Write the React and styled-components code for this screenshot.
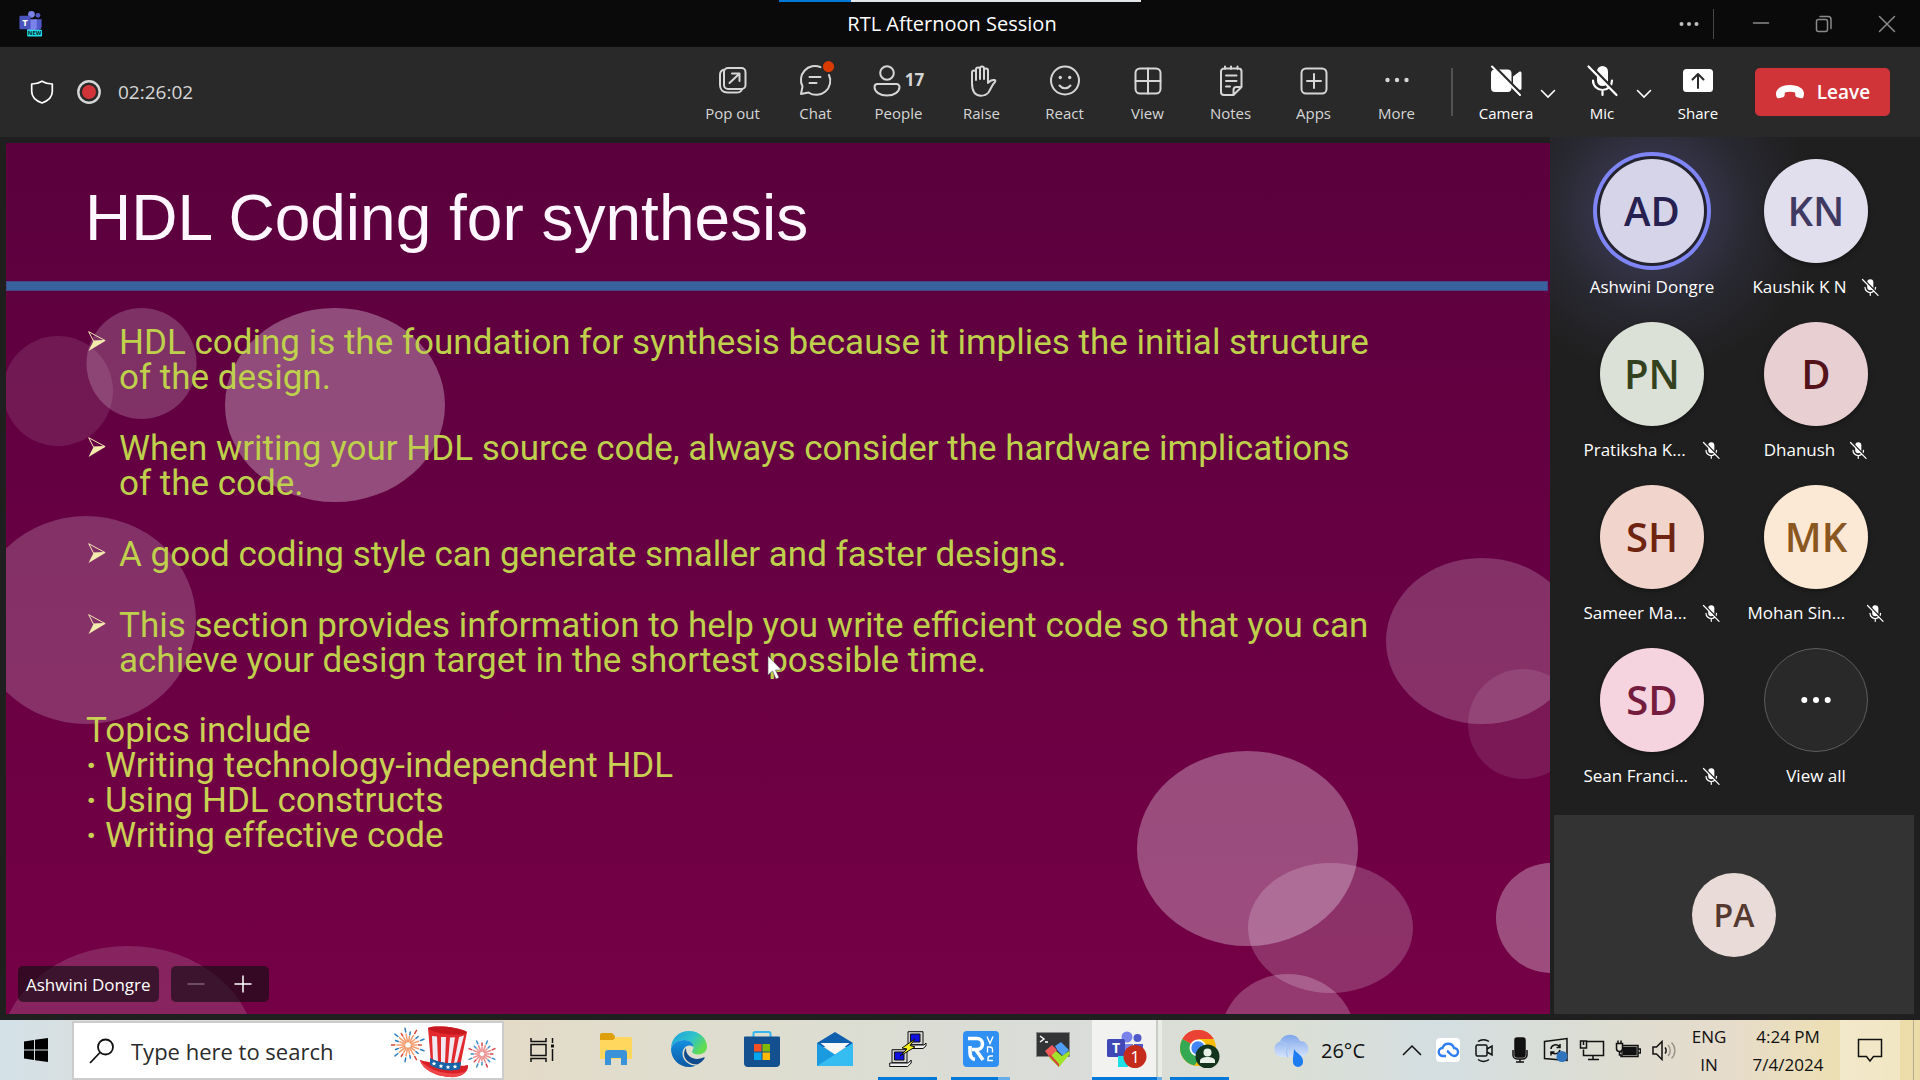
import React from "react";
import styled, { createGlobalStyle, css } from "styled-components";

const ui = `"Open Sans", "Noto Sans", sans-serif`;

const GlobalStyle = createGlobalStyle`
  *, *::before, *::after { box-sizing: border-box; }
  body { margin: 0; background: #1f1f1f; font-family: ${ui}; color: #fff; }
  button, input { font: inherit; color: inherit; }
  button { border: 0; padding: 0; background: none; cursor: pointer; }
  h1, h2, p, ul { margin: 0; padding: 0; font-weight: 400; }
  ul { list-style: none; }
  svg { display: block; flex: none; }
`;

const Screen = styled.div`
  min-height: 100vh;
  display: flex;
  flex-direction: column;
  background: #1f1f1f;
`;

/* ---------- window title bar ---------- */

const TitleBar = styled.header`
  position: relative;
  height: 47px;
  display: grid;
  grid-template-columns: 1fr auto 1fr;
  align-items: center;
  background: #0a0a0a;
`;
const TitleSide = styled.div`
  display: flex;
  align-items: center;
  justify-content: ${(p) => (p.$end ? "flex-end" : "flex-start")};
  padding: ${(p) => (p.$end ? "0 2px 0 0" : "0 0 0 18px")};
`;
const WindowTitle = styled.h1`
  padding-right: 16px;
  font-size: 20px;
  line-height: 28px;
  white-space: nowrap;
`;
const LoadBar = styled.div`
  position: absolute;
  top: 0;
  left: calc(50% - 181px);
  width: 362px;
  height: 2px;
  background: linear-gradient(90deg, #0078d7 72px, #e3e6e8 72px);
`;
const WindowButton = styled.button`
  width: 63px;
  height: 47px;
  display: grid;
  place-items: center;
  color: #8a8a8a;
`;
const MoreButton = styled(WindowButton)`
  width: 48px;
  color: #c0c0c0;
`;
const TitleDivider = styled.span`
  width: 1px;
  height: 30px;
  margin-right: 15px;
  background: #484848;
`;

/* ---------- meeting toolbar ---------- */

const Toolbar = styled.div`
  height: 90px;
  display: flex;
  align-items: center;
  padding: 0 30px;
  background: #292929;
`;
const Status = styled.div`
  flex: 1;
  display: flex;
  align-items: center;
  font-size: 19px;
  line-height: 28px;
  color: #d6d6d6;
`;
const StatusIcon = styled.span`
  margin-right: ${(p) => p.$gap}px;
`;
const ToolButton = styled.button`
  width: ${(p) => p.$w || 83}px;
  margin-right: ${(p) => p.$after || 0}px;
  display: flex;
  flex-direction: column;
  align-items: center;
  gap: 4px;
  padding-top: 2px;
  font-size: 15px;
  line-height: 22px;
  white-space: nowrap;
  color: ${(p) => (p.$bright ? "#fff" : "#d6d6d6")};
`;
const ToolIcon = styled.span`
  height: 36px;
  display: flex;
  align-items: center;
  gap: 2px;
  font-size: 17px;
  font-weight: 700;
  svg { overflow: visible; }
`;
const ToolDivider = styled.span`
  width: 2px;
  height: 48px;
  margin: 0 21px 0 13px;
  background: #525252;
`;
const ChevronButton = styled.button`
  width: 20px;
  height: 36px;
  margin-right: ${(p) => p.$gap}px;
  display: grid;
  place-items: center;
  padding-top: 4px;
`;
const LeaveButton = styled.button`
  width: 135px;
  height: 48px;
  display: flex;
  align-items: center;
  justify-content: center;
  gap: 12px;
  border-radius: 5px;
  background: #d13438;
  font-size: 19px;
  font-weight: 600;
`;

/* ---------- shared slide ---------- */

const Main = styled.main`
  flex: 1;
  display: flex;
`;
const Stage = styled.section`
  flex: 1;
  min-width: 0;
  padding: 6px 0 6px 6px;
  display: flex;
`;
const Slide = styled.article`
  position: relative;
  flex: 1;
  display: flex;
  flex-direction: column;
  overflow: hidden;
  background: linear-gradient(#5b003d, #660042 45%, #750045);
`;
const Bubbles = styled.svg`
  position: absolute;
  inset: 0;
  width: 100%;
  height: 100%;
`;
const SlideHeader = styled.div`
  position: relative;
  height: 138px;
  padding: 12px 0 0 79px;
  display: flex;
  align-items: center;
`;
const SlideTitle = styled.h2`
  font-family: "Liberation Sans", Arial, sans-serif;
  font-size: 64px;
  line-height: 72px;
  color: #fff6ff;
  white-space: nowrap;
`;
const SlideRule = styled.div`
  height: 10px;
  margin-right: 2px;
  background: #38639c;
  border: 1px solid #48468a;
`;
const SlideBody = styled.div`
  position: relative;
  padding: 34px 0 0 80px;
  font-family: Roboto, "Liberation Sans", sans-serif;
  font-size: 35px;
  font-weight: 300;
  line-height: 35px;
  color: #bfd04c;
  white-space: nowrap;
`;
const Points = styled.ul`
  display: flex;
  flex-direction: column;
  gap: 36px;
  margin-bottom: 35px;
`;
const Point = styled.li`
  display: flex;
  gap: 13px;
  svg { margin: 6px 0 0 2px; }
`;
const Topics = styled.div`
  color: #c9d053;
`;
const Topic = styled.li`
  display: flex;
  &::before { content: "·"; width: 19px; font-weight: 700; }
`;
const StageControls = styled.div`
  position: absolute;
  left: 12px;
  bottom: 12px;
  display: flex;
  gap: 12px;
`;
const Pill = styled.div`
  height: 36px;
  display: flex;
  align-items: center;
  padding: 0 ${(p) => p.$pad}px;
  border-radius: 5px;
  background: rgba(20, 12, 18, 0.65);
  font-size: 17px;
  white-space: nowrap;
`;
const ZoomButton = styled.button`
  width: 47px;
  height: 36px;
  display: grid;
  place-items: center;
  color: ${(p) => (p.disabled ? "#80607a" : "#fff")};
`;
const Pointer = styled.svg`
  position: absolute;
  left: 761px;
  top: 512px;
`;

/* ---------- participants ---------- */

const Sidebar = styled.aside`
  width: 370px;
  display: flex;
  flex-direction: column;
  padding: 22px 6px 6px 4px;
  background: radial-gradient(circle at 102px 74px, rgba(112, 112, 190, 0.42), rgba(112, 112, 190, 0.1) 105px, transparent 165px);
`;
const People = styled.ul`
  display: grid;
  grid-template-columns: repeat(2, 164px);
  grid-auto-rows: 163px;
  padding-left: 16px;
`;
const Person = styled.li`
  display: flex;
  flex-direction: column;
  align-items: center;
  gap: 12px;
`;
const avatarShape = css`
  width: 104px;
  height: 104px;
  display: grid;
  place-items: center;
  border-radius: 50%;
`;
const Avatar = styled.div`
  ${avatarShape}
  background: ${(p) => p.$bg};
  color: ${(p) => p.$fg};
  font-size: 40px;
  font-weight: 600;
  line-height: 52px;
  box-shadow: ${(p) =>
    p.$speaking ? "0 0 0 3px #23232f, 0 0 0 7px #7f85f5" : "0 2px 5px rgba(0,0,0,.35)"};
`;
const ViewAll = styled.button`
  ${avatarShape}
  border: 1px solid #5c5c5c;
  background: #292929;
`;
const NameRow = styled.div`
  display: flex;
  align-items: center;
  gap: 13px;
  height: 24px;
  font-size: 17px;
  line-height: 24px;
  white-space: nowrap;
`;
const Name = styled.span`
  ${(p) => p.$cut && "width: 104px;"}
`;
const SelfTile = styled.div`
  flex: 1;
  margin-top: 4px;
  display: grid;
  place-items: center;
  background: #333;
`;
const SelfAvatar = styled(Avatar)`
  width: 84px;
  height: 84px;
  font-size: 32px;
  line-height: 40px;
  box-shadow: none;
`;

/* ---------- task bar ---------- */

const TaskBar = styled.footer`
  height: 60px;
  display: flex;
  color: #111;
  background: linear-gradient(
    90deg, #d3e1e8 0, #d8dfe0 4%, #e4dac6 26%, #e0ddcd 33%, #dcddd2 45%, #d9dcd9 56%,
    #dcdfd3 66%, #d4dee1 75%, #dcddd3 83%, #e6dccb 90%, #ecdfb6 95%, #ecdca8 100%
  );
`;
const StartButton = styled.button`
  width: 72px;
  display: grid;
  place-items: center;
`;
const SearchBox = styled.label`
  width: 432px;
  margin-top: 1px;
  display: flex;
  align-items: center;
  padding: 0 5px 0 15px;
  background: #fff;
  border: 2px solid #ccc;
`;
const SearchInput = styled.input`
  flex: 1;
  min-width: 0;
  margin-left: 16px;
  padding: 0;
  border: 0;
  outline: 0;
  background: none;
  font-size: 22px;
  &::placeholder { color: #2b2b2b; opacity: 1; }
`;
const TaskViewButton = styled(StartButton)`
  width: 75px;
`;
const AppButton = styled.button`
  width: 73px;
  display: flex;
  flex-direction: column;
  align-items: center;
`;
const AppFace = styled.span`
  flex: 1;
  width: ${(p) => (p.$active ? 70 : 59)}px;
  display: grid;
  place-items: center;
  background: ${(p) =>
    p.$active
      ? "linear-gradient(90deg, #f2f3f1 64px, #c9cbc5 64px, #c9cbc5 66px, #eaece6 66px)"
      : "none"};
`;
const Underline = styled.span`
  width: ${(p) => (p.$active ? 70 : 59)}px;
  height: 3px;
  background: ${(p) =>
    !p.$open
      ? "transparent"
      : p.$stacked
      ? `linear-gradient(90deg, #0078d7 ${p.$stacked}px, #66aee8 ${p.$stacked}px)`
      : "#0078d7"};
`;
const Spacer = styled.span`
  flex: 1;
`;
const Weather = styled.button`
  width: 132px;
  display: flex;
  align-items: center;
  gap: 12px;
  padding-left: 11px;
  font-size: 20px;
`;
const TrayButton = styled.button`
  width: 36px;
  display: grid;
  place-items: center;
`;
const TrayText = styled.button`
  width: ${(p) => p.$w}px;
  padding-top: 2px;
  font-size: 17px;
  line-height: 28px;
  text-align: center;
  white-space: nowrap;
`;
const ActionCenter = styled.button`
  width: 60px;
  display: grid;
  place-items: center;
  background: rgba(255, 255, 255, 0.3);
`;
const ShowDesktop = styled.button`
  width: 7px;
  margin-left: 13px;
  border-left: 1px solid #b4ab90;
`;

/* ---------- icons ---------- */

const Line = ({ size = 36, children, w = 2, vb = 36, width }) => (
  <svg width={width || size} height={size} viewBox={`0 0 ${width || vb} ${vb}`} fill="none" stroke="currentColor"
    strokeWidth={w} strokeLinecap="round" strokeLinejoin="round" aria-hidden="true">{children}</svg>
);

const Dots = ({ r = 2.2, gap = 9.5, size = 36 }) => (
  <svg width={size} height={size} viewBox="-18 -18 36 36" fill="currentColor" aria-hidden="true">
    {[-gap, 0, gap].map((x) => <circle key={x} cx={x} cy="0" r={r} />)}
  </svg>
);

const icons = {
  popout: (
    <Line>
      <rect x="9" y="6" width="21.500" height="21" rx="4" />
      <path d="M8.500 7.700C6 8.500 5 10.500 5 13v10c0 4.500 3 7.500 7.500 7.500h9c2.500 0 4.700-.8 5.500-3.300M14.500 21l9.800-9.300M17 11.500h7.500v7.500" />
    </Line>
  ),
  chat: (
    <Line>
      <path d="M22.500 5.200A14 14 0 0 0 4.500 24.500L3 32l7.500-1.500A14 14 0 0 0 31 13M11.500 15h11M11.500 21h7" />
      <circle cx="30.500" cy="4.600" r="5.600" fill="#da3b01" stroke="none" />
    </Line>
  ),
  people: (
    <Line width={30}>
      <circle cx="14" cy="11" r="6.800" />
      <path d="M4.500 22h19a3 3 0 0 1 3 3c0 5-5.500 8.500-12.500 8.500S1.500 30 1.500 25a3 3 0 0 1 3-3z" />
    </Line>
  ),
  raise: (
    <Line>
      <path d="M8 21V10.500a2 2 0 0 1 4 0V18M12 17V7.500a2 2 0 0 1 4 0V17M16 16V6.500a2 2 0 0 1 4 0V17M20 17V8.500a2 2 0 0 1 4 0V21c2-2.500 4-3.500 6.500-3 1 .3 1 1.300.4 2-3 3-4 7-6.500 10.500-1.800 2.300-4 3.200-7.400 3.200C10.500 33.700 8 29 8 21" />
    </Line>
  ),
  react: (
    <Line>
      <circle cx="18" cy="18.500" r="14" />
      <path d="M12.500 23.500c3 3.600 8 3.600 11 0" />
      <circle cx="13.300" cy="15.500" r="1.700" fill="currentColor" stroke="none" />
      <circle cx="22.700" cy="15.500" r="1.700" fill="currentColor" stroke="none" />
    </Line>
  ),
  view: (
    <Line>
      <rect x="5.500" y="6.500" width="25" height="25" rx="4.500" />
      <path d="M18 6.500v25M5.500 19h25" />
    </Line>
  ),
  notes: (
    <Line>
      <path d="M20.500 33H11a3 3 0 0 1-3-3V9.500a3 3 0 0 1 3-3h14.500a3 3 0 0 1 3 3V25zM20.500 33v-5a3 3 0 0 1 3-3h5M12 4.500v2.500M18 4.500v2.500M24.500 4.500v2.500M13 13.500h10.500M13 19h10.500M13 24.500h4" />
    </Line>
  ),
  apps: (
    <Line>
      <rect x="5.500" y="6.500" width="25" height="25" rx="4.500" />
      <path d="M18 12v14M11 19h14" />
    </Line>
  ),
  more: <Dots />,
  camera: (
    <svg width="36" height="36" viewBox="0 0 36 36" aria-hidden="true">
      <path fill="#fff" d="M7 7.500h12.500a4 4 0 0 1 4 4v14.500a4 4 0 0 1-4 4H7a4 4 0 0 1-4-4V11.500a4 4 0 0 1 4-4zM25 14.500l6.300-4.700c1-.7 2.200 0 2.200 1.200v15.500c0 1.200-1.200 1.900-2.200 1.200L25 23z" />
      <path stroke="#292929" strokeWidth="2.500" d="M6.500 4.500L34 32.500" />
      <path stroke="#fff" strokeWidth="2" strokeLinecap="round" d="M4 4.500L32 33" />
    </svg>
  ),
  share: (
    <svg width="36" height="36" viewBox="0 0 36 36" fill="none" aria-hidden="true">
      <rect x="3" y="7" width="30" height="23" rx="3.500" fill="#fff" />
      <path d="M18 26V12.500M12.500 17.500L18 12l5.500 5.500" stroke="#292929" strokeWidth="2" strokeLinecap="round" strokeLinejoin="round" />
    </svg>
  ),
};

const MicOff = ({ size = 36, cut = "#292929" }) => (
  <svg width={size} height={size} viewBox="0 0 36 36" fill="none" aria-hidden="true">
    <rect x="13" y="4" width="11" height="20" rx="5.500" fill="#fff" />
    <path d="M9 18.500a9.500 9.500 0 0 0 19 0M18.500 28.500V33" stroke="#fff" strokeWidth="2.200" strokeLinecap="round" />
    <path d="M7 4.500L34 32" stroke={cut} strokeWidth="3" />
    <path d="M4.500 4.500L32.500 33" stroke="#fff" strokeWidth="2.200" strokeLinecap="round" />
  </svg>
);

const ChevronDown = () => (
  <svg width="16" height="10" viewBox="0 0 16 10" fill="none" stroke="#fff" strokeWidth="1.600" strokeLinecap="round" aria-hidden="true">
    <path d="M1.500 1.500L8 8l6.500-6.500" />
  </svg>
);

const TeamsLogo = ({ size }) => (
  <svg width={size} height={size} viewBox="0 0 24 27" aria-hidden="true">
    <circle cx="12.500" cy="3.500" r="3.500" fill="#7b83eb" />
    <circle cx="19.200" cy="4.500" r="2.500" fill="#5059c9" />
    <path d="M16 8.500h7v8a4 4 0 0 1-7 2z" fill="#5059c9" />
    <path d="M8 8.500h10v9a6 6 0 0 1-10 3z" fill="#7b83eb" />
    <rect x="0" y="5" width="11.500" height="14" rx="1" fill="#4b53bc" />
    <text x="5.700" y="15.700" fill="#fff" fontFamily="Open Sans" fontWeight="700" fontSize="10" textAnchor="middle">T</text>
    <rect x="8" y="19.500" width="15.500" height="7" rx="1" fill="#1fe0e6" />
    <text x="15.700" y="25.300" fill="#08222b" fontFamily="Open Sans" fontWeight="700" fontSize="6" textAnchor="middle">NEW</text>
  </svg>
);

const Burst = ({ cx, cy, r, n, tones }) =>
  Array.from({ length: n }, (_, i) => {
    const a = (i * 2 * Math.PI) / n;
    const R = i % 2 ? r : r * 0.78;
    const p = (k) => [cx + Math.cos(a) * k, cy + Math.sin(a) * k];
    const [x1, y1] = p(r * 0.2), [x2, y2] = p(R * 0.65), [x3, y3] = p(R * 0.78), [x4, y4] = p(R);
    return (
      <g key={i} strokeWidth="1.500" strokeLinecap="round">
        <path d={`M${x1} ${y1}L${x2} ${y2}`} stroke={tones[0]} />
        <path d={`M${x3} ${y3}L${x4} ${y4}`} stroke={i % 3 ? tones[1] : tones[2]} />
      </g>
    );
  });

const SearchArt = () => (
  <svg width="106" height="54" viewBox="0 0 106 54" aria-hidden="true">
    <Burst cx={17} cy={21} r={17} n={18} tones={["#f59a6b", "#2f7fc0", "#dc4637"]} />
    <Burst cx={91} cy={30} r={14} n={16} tones={["#ec8f8f", "#3f8fca", "#d8424a"]} />
    <path d="M29 36c7 2 36 8 48 5 1 8-8 13-19 12-14-1-27-8-29-17z" fill="#d91f26" />
    <path d="M37 4c6-3 32-1 39 4l-7 35c-8 3-22 1-29-4z" fill="#e02a2e" />
    <path d="M41 12l5 .5 1 25-5-2zM50 13h5l-1 26-4-1zM59 13.500l5-.2-4 26-3-.3zM68 13l5-1.500-7 27-3 .5z" fill="#f1e9f2" />
    <path d="M37 4c8-3 30-1 39 4-3 5-36 2-39-4z" fill="#c8181f" />
    <path d="M39 34c8 5 22 6 31 4l-1 7c-9 3-22 1-30-4z" fill="#1763a8" />
    {[[43, 39.500], [50, 42], [57, 43], [64, 42.500]].map(([x, y]) => (
      <path key={x} fill="#fff" d={`M${x} ${y - 2}l.7 1.300 1.500.2-1.100 1 .3 1.500-1.400-.7-1.400.7.3-1.500-1.100-1 1.500-.2z`} />
    ))}
    <path d="M29 36c2 9 15 16 29 17 8 .5 14-2 17-6-14 6-36 1-46-11z" fill="#f2474a" />
  </svg>
);

const appIcons = {
  explorer: (
    <svg width="34" height="34" viewBox="0 0 34 34" aria-hidden="true">
      <path d="M1 3a2 2 0 0 1 2-2h10l3 3v5H1z" fill="#dd9f0b" />
      <path d="M1 8h13l3-3h14a2 2 0 0 1 2 2v20H1z" fill="#ffd75e" />
      <path d="M6 33V21a3 3 0 0 1 3-3h16a3 3 0 0 1 3 3v12h-6v-7H12v7z" fill="#3a93d8" />
    </svg>
  ),
  edge: (
    <svg width="36" height="36" viewBox="0 0 36 36" aria-hidden="true">
      <defs>
        <linearGradient id="edgeTop" x1="0" y1="0" x2="1" y2=".5"><stop offset="0" stopColor="#1d9ee0" /><stop offset=".6" stopColor="#2fc3c9" /><stop offset="1" stopColor="#62dc4f" /></linearGradient>
        <linearGradient id="edgeLow" x1="0" y1="0" x2="0" y2="1"><stop offset="0" stopColor="#1490e0" /><stop offset="1" stopColor="#0c59a4" /></linearGradient>
      </defs>
      <path d="M0 18C0 7 8 0 18 0c11 0 18 8 18 15.500 0 5-4 8-9 8-4 0-6-1.500-6-3 0-1 1.500-1.700 1.500-4.500 0-4-4-7-9-7C6 9 1 13 0 18z" fill="url(#edgeTop)" />
      <path d="M0 18c1-5 6-9 13.500-9 5 0 9 3 9 7-6-4-11 1-11 6.500C11.500 30 19 35 25 34.500 22 36 20 36 18 36 8 36 0 28 0 18z" fill="url(#edgeLow)" />
      <path d="M15 17c-5 7 0 16 11 16.500 3-1 6-3.500 7.500-6 .5-1-.3-1.500-1-1-9 4-18-1-17.500-9.500z" fill="#114a8b" />
    </svg>
  ),
  store: (
    <svg width="36" height="36" viewBox="0 0 36 36" aria-hidden="true">
      <path d="M9.500 8V2.500a1.500 1.500 0 0 1 1.500-1.500h14a1.500 1.500 0 0 1 1.500 1.500V8" fill="none" stroke="#35b5ee" strokeWidth="2" />
      <path d="M0 6.500a1 1 0 0 1 1-1h34a1 1 0 0 1 1 1V32a4 4 0 0 1-4 4H4a4 4 0 0 1-4-4z" fill="#14508f" />
      <path d="M10 13h7.500v7.500H10z" fill="#f25022" /><path d="M18.500 13H26v7.500h-7.500z" fill="#7fba00" />
      <path d="M10 21.500h7.500V29H10z" fill="#00a4ef" /><path d="M18.500 21.500H26V29h-7.500z" fill="#ffb900" />
    </svg>
  ),
  mail: (
    <svg width="36" height="34" viewBox="0 0 36 34" aria-hidden="true">
      <path d="M0 11L18 0l18 11v4H0z" fill="#0f5fae" />
      <path d="M4 11h28L18 24z" fill="#f7f7f7" />
      <path d="M0 11l18 11.500L36 11v23H0z" fill="#1c9ae0" />
      <path d="M36 11L0 34h36z" fill="#35bdf2" />
      <path d="M3.500 11h29L18 21.500z" fill="#f7f7f7" />
    </svg>
  ),
  putty: (
    <svg width="38" height="36" viewBox="0 0 38 36" stroke="#111" strokeWidth="1" aria-hidden="true">
      <path d="M19 .7h15v13H19z" fill="#d4d4d4" /><path d="M21.500 3h9.500v8h-9.500z" fill="#1010e0" />
      <path d="M17 14h18l2-2v3l-3 2.500H17z" fill="#eee" />
      <path d="M3 18.700h15v13H3z" fill="#d4d4d4" /><path d="M5.500 21H15v8H5.500z" fill="#1010e0" />
      <path d="M.7 32h18.500l3-3v3l-3.500 3.500h-18z" fill="#eee" />
      <path d="M26 8l-13 9 5 1-7 7 15-9-5-1.500z" fill="#f6f21a" />
    </svg>
  ),
  vnc: (
    <svg width="36" height="36" viewBox="0 0 36 36" fill="none" stroke="#fff" aria-hidden="true">
      <rect width="36" height="36" rx="4" fill="#2f8ff2" stroke="none" />
      <path d="M5 7.500h9a5 5 0 0 1 0 11H9M7 15v6c0 5 2 7 5 7.500M13 19l7 10" strokeWidth="3.600" />
      <path d="M24 5.500l3 7 3-7M24.500 21.500V16h2.500a2.500 2.500 0 0 1 2.500 2.500v3M30 25h-2.500a2.500 2.500 0 0 0-2.500 2.500v2h5" strokeWidth="1.400" />
    </svg>
  ),
  moba: (
    <svg width="36" height="36" viewBox="0 0 36 36" aria-hidden="true">
      <rect x=".5" y="1.500" width="33" height="24" fill="#333436" stroke="#8a8a8a" />
      <path d="M4 5l4 3-4 3M9 11h3" fill="none" stroke="#fff" strokeWidth="1.500" />
      <path d="M9 20l7-6 5 5-6 9z" fill="#f05a5a" />
      <path d="M19 15l6-4 8 8-6 6-5-5z" fill="#4f9df4" />
      <path d="M13 27l7-7 6 5 7-5 1 3-11 13z" fill="#a3e22b" />
      <path d="M13 25l10 11v-3l-9-10z" fill="#d83c3c" />
    </svg>
  ),
  teams: (
    <svg width="40" height="38" viewBox="0 0 40 38" aria-hidden="true">
      <circle cx="20" cy="7" r="5.500" fill="#7b83eb" /><circle cx="30.500" cy="8" r="4" fill="#5059c9" />
      <path d="M14 14h12v14H14z" fill="#7b83eb" /><path d="M27 14h9v13h-9z" fill="#5059c9" />
      <rect x="0" y="9" width="18" height="18" rx="1.500" fill="#4048b8" />
      <text x="9" y="23" fill="#fff" fontFamily="Open Sans" fontWeight="700" fontSize="14" textAnchor="middle">T</text>
      <rect x="11" y="26" width="10" height="11" fill="#1fe0e6" />
      <circle cx="28" cy="26.500" r="11.500" fill="#c42b1c" />
      <text x="28" y="32.500" fill="#fff" fontFamily="Open Sans" fontSize="17" textAnchor="middle">1</text>
    </svg>
  ),
  chrome: (
    <svg width="40" height="38" viewBox="0 0 40 38" aria-hidden="true">
      <circle cx="18" cy="18" r="18" fill="#fbbc04" />
      <path d="M18 18L2.400 9A18 18 0 0 1 33.600 9z" fill="#ea4335" />
      <path d="M18 18L2.400 9a18 18 0 0 0 12 26.600L24 22z" fill="#34a853" />
      <path d="M18 18V9h15.600L26 18z" fill="#fbbc04" />
      <path d="M2.400 9A18 18 0 0 1 33.600 9H18z" fill="#ea4335" />
      <circle cx="18" cy="18" r="8.500" fill="#fff" /><circle cx="18" cy="18" r="6.700" fill="#4285f4" />
      <circle cx="27.500" cy="26.500" r="12" fill="#12331c" />
      <circle cx="27.500" cy="22.500" r="4" fill="#e8f0e8" /><path d="M20 33v-2c0-3 4-4 7.500-4s7.500 1 7.500 4v2z" fill="#e8f0e8" />
    </svg>
  ),
};

const Thin = ({ w = 26, h = 26, children, ...rest }) => (
  <svg width={w} height={h} viewBox={`0 0 ${w} ${h}`} fill="none" stroke="#111" strokeWidth="1.500" aria-hidden="true" {...rest}>{children}</svg>
);

const trayIcons = [
  ["Show hidden icons", <Thin><path d="M4 18l9-9 9 9" /></Thin>],
  ["Cloud drive", (
    <Thin>
      <rect x="1" y="1" width="24" height="24" rx="4" fill="#fff" stroke="none" />
      <path d="M11 19H8a4 4 0 0 1-.5-8A6 6 0 0 1 19 11a4 4 0 0 1 0 8c-4 0-4-4-7-5" stroke="#2f7df0" strokeWidth="2.400" />
    </Thin>
  )],
  ["Meet now", <Thin><rect x="5" y="8" width="11" height="11" rx="1.500" /><path d="M16 12l5-3v9l-5-3M7 4.500c3-2.500 8-2.500 11 0M7 22.500c3 2.500 8 2.500 11 0" /></Thin>],
  ["Microphone", <Thin><rect x="8" y="1" width="10" height="19" rx="2" fill="#111" /><path d="M6 13v5a4 4 0 0 0 4 4h6a4 4 0 0 0 4-4v-5M13 22v3M9 25h8" /></Thin>],
  ["Sync", (
    <Thin>
      <path d="M1.500 4.500L24 1.500v22l-22.500-2zM8 12c0-4 6-6 9-2M17 7v3.500h-3.500M17 13c-1 4-6 5-9 2M8 18.500V15h3.500" />
      <circle cx="19" cy="19.500" r="5.500" fill="#2f74bd" stroke="none" />
    </Thin>
  )],
  ["Network", <Thin><path d="M8 4.500h16.500v14H4.500v-6M14 18.500v4M9 22.500h11" /><path d="M1.500 4h6v7h-6zM4.500 4v4" /></Thin>],
  ["Battery", <Thin><path d="M6 8.500h17v11H6zM23.500 12h2v4h-2" /><path d="M8 10.500h13v7H8z" fill="#111" /><path d="M1.500 6.500h6v5a3 3 0 0 1-6 0zM3 3.500v3M6 3.500v3M4.500 15v3H8" fill="#e0ddd0" /></Thin>],
  ["Volume", <Thin><path d="M2 10h3.500L11 4.500v18L5.500 17H2zM14 10.500c1.500 1.500 1.500 4.500 0 6" /><path d="M17 8c3 3 3 8 0 11M20.500 5.500c4.500 4.500 4.500 11.500 0 16" stroke="#9a968b" /></Thin>],
];

/* ---------- data ---------- */

const tools = [
  ["popout", "Pop out"], ["chat", "Chat"], ["people", "People", "17"], ["raise", "Raise"], ["react", "React"],
  ["view", "View"], ["notes", "Notes"], ["apps", "Apps"], ["more", "More"],
];

const points = [
  ["HDL coding is the foundation for synthesis because it implies the initial structure", "of the design."],
  ["When writing your HDL source code, always consider the hardware implications", "of the code."],
  ["A good coding style can generate smaller and faster designs."],
  ["This section provides information to help you write efficient code so that you can", "achieve your design target in the shortest possible time."],
];

const topics = ["Writing technology-independent HDL", "Using HDL constructs", "Writing effective code"];

const people = [
  { i: "AD", name: "Ashwini Dongre", bg: "#d6d4e9", fg: "#262150", speaking: true },
  { i: "KN", name: "Kaushik K N", bg: "#e1dfed", fg: "#403a62" },
  { i: "PN", name: "Pratiksha K...", bg: "#dbe1d6", fg: "#34411f", cut: true },
  { i: "D", name: "Dhanush", bg: "#e7cfd2", fg: "#54121b" },
  { i: "SH", name: "Sameer Ma...", bg: "#f1d5cd", fg: "#6e2410", cut: true },
  { i: "MK", name: "Mohan Sin...", bg: "#fce9d5", fg: "#8a5720", cut: true },
  { i: "SD", name: "Sean Franci...", bg: "#f5d4e0", fg: "#741c3e", cut: true },
];

const bubbles = [
  [52, 248, 55, 55, 0.1], [135.500, 220.500, 55, 55.500, 0.2], [329, 262, 110, 97, 0.31], [80, 477, 110, 104, 0.2],
  [122, 913, 129, 110, 0.15], [1476, 498, 96, 83, 0.2], [1517, 581, 55, 55, 0.1], [1241.500, 705.500, 110.500, 97.500, 0.31],
  [1324.500, 785, 82.500, 65, 0.2], [1282, 896, 68, 65, 0.24], [1545, 775, 55, 55, 0.31],
];

const apps = [
  { id: "explorer", label: "File Explorer" }, { id: "edge", label: "Microsoft Edge" }, { id: "store", label: "Microsoft Store" },
  { id: "mail", label: "Mail" }, { id: "putty", label: "PuTTY", open: true }, { id: "vnc", label: "RealVNC", open: true, stacked: 47 },
  { id: "moba", label: "MobaXterm" }, { id: "teams", label: "Microsoft Teams", open: true, active: true, stacked: 65 },
  { id: "chrome", label: "Google Chrome", open: true },
];

export default function App() {
  return (
    <Screen>
      <GlobalStyle />
      <TitleBar>
        <LoadBar />
        <TitleSide><TeamsLogo size={26} /></TitleSide>
        <WindowTitle>RTL Afternoon Session</WindowTitle>
        <TitleSide $end>
          <MoreButton aria-label="More options"><Dots r={2} gap={7.5} /></MoreButton>
          <TitleDivider />
          <WindowButton aria-label="Minimize"><Line size={18} vb={18} w={1.5}><path d="M1.500 8h15" /></Line></WindowButton>
          <WindowButton aria-label="Restore"><Line size={18} vb={18} w={1.5}><rect x="1.500" y="4.500" width="11" height="12" rx="2" /><path d="M5 1.500h8a3 3 0 0 1 3 3v9" /></Line></WindowButton>
          <WindowButton aria-label="Close"><Line size={18} vb={18} w={1.5}><path d="M1.500 1.500l15 15M16.500 1.500l-15 15" /></Line></WindowButton>
        </TitleSide>
      </TitleBar>

      <Toolbar>
        <Status>
          <StatusIcon $gap={23}>
            <Line size={24} vb={24} w={1.7}><path d="M12 1.200C14.800 3 18 4 22.300 4v7.500c0 5.500-3.500 9-10.300 11.500C5.200 20.500 1.700 17 1.700 11.500V4C6 4 9.200 3 12 1.200z" stroke="#fff" /></Line>
          </StatusIcon>
          <StatusIcon $gap={17}>
            <svg width="24" height="24" viewBox="0 0 24 24" aria-hidden="true"><circle cx="12" cy="12" r="10.700" fill="none" stroke="#d6d6d6" strokeWidth="2.400" /><circle cx="12" cy="12" r="7" fill="#d13438" /></svg>
          </StatusIcon>
          <span>02:26:02</span>
        </Status>
        {tools.map(([id, label, count]) => (
          <ToolButton key={id}><ToolIcon>{icons[id]}{count}</ToolIcon>{label}</ToolButton>
        ))}
        <ToolDivider />
        <ToolButton $w={64} $bright><ToolIcon>{icons.camera}</ToolIcon>Camera</ToolButton>
        <ChevronButton $gap={12} aria-label="Camera options"><ChevronDown /></ChevronButton>
        <ToolButton $w={64} $bright><ToolIcon><MicOff /></ToolIcon>Mic</ToolButton>
        <ChevronButton $gap={12} aria-label="Mic options"><ChevronDown /></ChevronButton>
        <ToolButton $w={64} $after={25} $bright><ToolIcon>{icons.share}</ToolIcon>Share</ToolButton>
        <LeaveButton>
          <svg width="30" height="16" viewBox="0 0 30 16" fill="#fff" aria-hidden="true"><path d="M15 1C7 1 1 4.500 1 9.500c0 1 .3 2.700.6 3.500.4 1 1.300 1.400 2.300 1.200l4-.9c1-.2 1.600-1 1.700-2l.3-2.800c3-1 7.200-1 10.200 0l.3 2.800c.1 1 .7 1.800 1.700 2l4 .9c1 .2 1.900-.2 2.300-1.200.3-.8.6-2.500.6-3.500C29 4.500 23 1 15 1z" /></svg>
          Leave
        </LeaveButton>
      </Toolbar>

      <Main>
        <Stage>
          <Slide>
            <Bubbles viewBox="0 0 1544 871" preserveAspectRatio="none" aria-hidden="true">
              {bubbles.map(([cx, cy, rx, ry, o]) => (
                <ellipse key={`${cx}-${cy}`} cx={cx} cy={cy} rx={rx} ry={ry} fill="#fbf4ff" fillOpacity={o} />
              ))}
            </Bubbles>
            <SlideHeader><SlideTitle>HDL Coding for synthesis</SlideTitle></SlideHeader>
            <SlideRule />
            <SlideBody>
              <Points>
                {points.map((lines) => (
                  <Point key={lines[0]}>
                    <svg width="18" height="20" viewBox="0 0 18 20" aria-hidden="true">
                      <path d="M.7.7L17 9.500 5.500 10z" fill="none" stroke="#f3e7b4" strokeWidth="1" />
                      <path d="M18 9.500L.5 20l5-10z" fill="#f3ecae" />
                    </svg>
                    <p>{lines[0]}{lines[1] && <><br />{lines[1]}</>}</p>
                  </Point>
                ))}
              </Points>
              <Topics>
                <p>Topics include</p>
                <ul>{topics.map((t) => <Topic key={t}>{t}</Topic>)}</ul>
              </Topics>
            </SlideBody>
            <Pointer width="15" height="25" viewBox="0 0 15 25" aria-hidden="true">
              <path d="M1 1v19l4.500-4 3.500 8 3-1.500-3.500-7.500h6z" fill="#fff" stroke="#555" strokeWidth=".6" />
            </Pointer>
            <StageControls>
              <Pill $pad={8}>Ashwini Dongre</Pill>
              <Pill $pad={2}>
                <ZoomButton disabled aria-label="Zoom out"><Line size={18} vb={18} w={1.5}><path d="M1 9h16" /></Line></ZoomButton>
                <ZoomButton aria-label="Zoom in"><Line size={18} vb={18} w={1.5}><path d="M1 9h16M9 1v16" /></Line></ZoomButton>
              </Pill>
            </StageControls>
          </Slide>
        </Stage>

        <Sidebar>
          <People>
            {people.map((p) => (
              <Person key={p.i}>
                <Avatar $bg={p.bg} $fg={p.fg} $speaking={p.speaking}>{p.i}</Avatar>
                <NameRow><Name $cut={p.cut}>{p.name}</Name>{!p.speaking && <MicOff size={20} cut="#1f1f1f" />}</NameRow>
              </Person>
            ))}
            <Person>
              <ViewAll aria-label="View all participants"><Dots r={3} gap={11.7} /></ViewAll>
              <NameRow>View all</NameRow>
            </Person>
          </People>
          <SelfTile><SelfAvatar $bg="#e9dcd8" $fg="#55382f">PA</SelfAvatar></SelfTile>
        </Sidebar>
      </Main>

      <TaskBar>
        <StartButton aria-label="Start">
          <svg width="24" height="24" viewBox="0 0 24 24" aria-hidden="true"><path d="M0 3.500L10 2v9.500H0zM11 1.800L24 0v11.500H11zM0 12.500h10V22L0 20.500zM11 12.500h13V24l-13-1.800z" /></svg>
        </StartButton>
        <SearchBox>
          <Thin w={26} h={26} strokeWidth="1.800"><circle cx="16.500" cy="9" r="7.500" /><path d="M11 14.500L1 25" /></Thin>
          <SearchInput type="text" placeholder="Type here to search" aria-label="Type here to search" />
          <SearchArt />
        </SearchBox>
        <TaskViewButton aria-label="Task view">
          <Thin w={26} h={26}><path d="M2 1v3.500h15V1M2 25v-3.500h15V25M2 7.500h15v11H2zM23.500 1v5M23.500 12v12" /><path d="M22 7.500h3v3h-3z" fill="#111" stroke="none" /></Thin>
        </TaskViewButton>
        {apps.map((a) => (
          <AppButton key={a.id} aria-label={a.label}>
            <AppFace $active={a.active}>{appIcons[a.id]}</AppFace>
            <Underline $open={a.open} $active={a.active} $stacked={a.stacked} />
          </AppButton>
        ))}
        <Spacer />
        <Weather>
          <svg width="36" height="34" viewBox="0 0 36 34" aria-hidden="true">
            <defs><linearGradient id="cloud" x1="0" y1="0" x2="0" y2="1"><stop offset="0" stopColor="#7ea6ea" /><stop offset="1" stopColor="#d4e2fb" /></linearGradient></defs>
            <path d="M8 24a8 8 0 0 1-1-15.500A11 11 0 0 1 27 8a8 8 0 0 1 1 16z" fill="url(#cloud)" />
            <path d="M15 24c-4-6 1-12 7-12M7 9c4 0 7 2 8 5" fill="none" stroke="#a9c4f2" strokeWidth="1.500" />
            <path d="M21 16c2 4 10 7 9 13a5 5 0 0 1-10 0c-.5-4 1-9 1-13z" fill="#1d7cf2" />
          </svg>
          26°C
        </Weather>
        {trayIcons.map(([label, icon]) => <TrayButton key={label} aria-label={label}>{icon}</TrayButton>)}
        <TrayText $w={54}>ENG<br />IN</TrayText>
        <TrayText $w={104}>4:24 PM<br />7/4/2024</TrayText>
        <ActionCenter aria-label="Notifications"><Thin><path d="M1.500 2.500h23v17h-8L13 24l-3.500-4.500h-8z" /></Thin></ActionCenter>
        <ShowDesktop aria-label="Show desktop" />
      </TaskBar>
    </Screen>
  );
}
